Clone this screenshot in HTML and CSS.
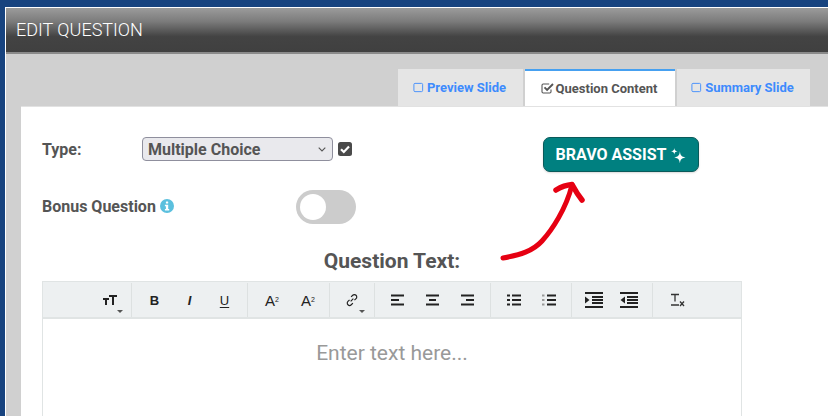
FILE: index.html
```html
<!DOCTYPE html>
<html lang="en">
<head>
<meta charset="utf-8">
<title>Edit Question</title>
<link rel="stylesheet" href="styles.css">
</head>
<body>
<div class="modal">
  <header class="modal-head">EDIT QUESTION</header>
  <div class="modal-body">
    <nav class="tabs">
      <a class="tab"><svg class="tab-ico" viewBox="0 0 12 12"><rect x="1" y="1.5" width="9.5" height="9" rx="1.2" fill="none" stroke="currentColor" stroke-width="1"/></svg>Preview Slide</a>
      <a class="tab tab-active"><svg class="tab-ico tab-ico-check" viewBox="0 0 13 13"><path d="M10 7.500v2.300a1.200 1.200 0 0 1-1.200 1.200H2.200A1.200 1.200 0 0 1 1 9.800V3.200A1.200 1.200 0 0 1 2.200 2h6" fill="none" stroke="currentColor" stroke-width="1.100"/><path d="M3.500 5.400l2.600 2.600L12 2" fill="none" stroke="currentColor" stroke-width="1.900"/></svg>Question Content</a>
      <a class="tab"><svg class="tab-ico" viewBox="0 0 12 12"><rect x="1" y="1.500" width="9.500" height="9" rx="1.200" fill="none" stroke="currentColor" stroke-width="1"/></svg>Summary Slide</a>
    </nav>
    <main class="panel">
      <div class="top-row">
        <div class="fields">
          <div class="field type-field">
            <label class="field-label type-label">Type:</label>
            <span class="select-wrap">
              <select class="type-select"><option>Multiple Choice</option></select>
              <svg class="chevron" viewBox="0 0 8 5"><path d="M.7.7L4 4l3.300-3.300" fill="none" stroke="#555" stroke-width="1.100"/></svg>
            </span>
            <svg class="check" viewBox="0 0 14 14"><rect width="14" height="14" rx="2.500" fill="#4a4a4a"/><path d="M3 7.200l2.800 2.800L11 4.600" fill="none" stroke="#fff" stroke-width="2.200"/></svg>
          </div>
          <div class="field bonus-field">
            <label class="field-label bonus-label">Bonus Question <svg class="info" viewBox="0 0 14 14"><circle cx="7" cy="7" r="7" fill="#5bc0de"/><rect x="5.900" y="2.400" width="2.300" height="2.200" rx=".5" fill="#fff"/><path d="M4.900 5.800h3.300v4.100h1v1.500H4.900V9.900h1V7.300h-1z" fill="#fff"/></svg></label>
            <span class="toggle"><span class="knob"></span></span>
          </div>
        </div>
        <button class="assist">BRAVO ASSIST <svg class="spark" viewBox="0 0 16 16"><path d="M9.500 3.500C10 8 11 9.200 15.500 10 11 10.800 10 12 9.500 16.500 9 12 8 10.800 3.500 10 8 9.200 9 8 9.500 3.500z" fill="#fff"/><path d="M3.500 0C3.800 2.400 4.400 3 7 3.500 4.400 4 3.800 4.600 3.500 7 3.200 4.600 2.600 4 0 3.500 2.600 3 3.200 2.400 3.500 0z" fill="#fff"/></svg></button>
      </div>
      <h2 class="q-title">Question Text:</h2>
      <section class="editor">
        <div class="toolbar">
          <div class="group g-size">
            <span class="tool"><svg viewBox="0 0 14 10" class="ico-t"><path d="M0 4h6M3 4v6M6 1h8M10 1v9" fill="none" stroke="#222" stroke-width="2"/></svg><i class="caret"></i></span>
          </div>
          <div class="group g-format">
            <span class="tool ltr bold">B</span>
            <span class="tool ltr ital">I</span>
            <span class="tool ltr under">U</span>
          </div>
          <div class="group g-script">
            <span class="tool ltr ltr-a">A<sup class="mini">2</sup></span>
            <span class="tool ltr ltr-a">A<sub class="mini">2</sub></span>
          </div>
          <div class="group g-link">
            <span class="tool"><svg viewBox="0 0 20 20" class="ico"><path d="M8.500 11.500l3-3M9 6.500l1.800-1.800a2.600 2.600 0 0 1 3.700 3.700l-1.800 1.800M11 13.500l-1.800 1.800a2.600 2.600 0 0 1-3.700-3.700l1.800-1.800" fill="none" stroke="#222" stroke-width="1.300"/></svg><i class="caret"></i></span>
          </div>
          <div class="group g-align">
            <span class="tool"><svg viewBox="0 0 14 12" class="ico-s"><path d="M0 1.500h13M0 6h8M0 10.500h13" stroke="#222" stroke-width="1.800"/></svg></span>
            <span class="tool"><svg viewBox="0 0 14 12" class="ico-s"><path d="M0 1.500h13M3 6h7M0 10.500h13" stroke="#222" stroke-width="1.800"/></svg></span>
            <span class="tool"><svg viewBox="0 0 14 12" class="ico-s"><path d="M0 1.500h13M5 6h8M0 10.500h13" stroke="#222" stroke-width="1.800"/></svg></span>
          </div>
          <div class="group g-list">
            <span class="tool"><svg viewBox="0 0 14 12" class="ico-s"><path d="M0 1.500h3M0 6h3M0 10.500h3M5 1.500h9M5 6h9M5 10.500h9" stroke="#222" stroke-width="1.800"/></svg></span>
            <span class="tool"><svg viewBox="0 0 14 12" class="ico-s"><path d="M5 1.500h9M5 6h9M5 10.500h9" stroke="#222" stroke-width="1.800"/><path d="M0 1.500h2.500M0 6h2.500M0 10.500h2.500" stroke="#999" stroke-width="1.800"/></svg></span>
          </div>
          <div class="group g-indent">
            <span class="tool"><svg viewBox="0 0 18 16" class="ico-i"><path d="M0 1h18M7 5h11M7 8h11M7 11h11M0 15h18" stroke="#222" stroke-width="2"/><path d="M0 4.500L4.500 8 0 11.500z" fill="#222"/></svg></span>
            <span class="tool"><svg viewBox="0 0 18 16" class="ico-i"><path d="M0 1h18M7 5h11M7 8h11M7 11h11M0 15h18" stroke="#222" stroke-width="2"/><path d="M5 4.500L.5 8 5 11.500z" fill="#222"/></svg></span>
          </div>
          <div class="group g-clear">
            <span class="tool"><svg viewBox="0 0 14 14" class="ico-c"><path d="M0 1.500h8M4 1.500v7M0 12h8" fill="none" stroke="#333" stroke-width="1.300"/><path d="M9 8.500l4 4.500M13 8.500L9 13" fill="none" stroke="#333" stroke-width="1.300"/></svg></span>
          </div>
        </div>
        <div class="edit-area">Enter text here...</div>
      </section>
      <svg class="arrow" viewBox="0 0 90 90"><path d="M3 82C20 79 33 75 42 65 52 54 66 33 72 9" fill="none" stroke="#e60012" stroke-width="5" stroke-linecap="round"/><path d="M56 14C61 11 66 9 72 8.500 75 14 78 19 82 24" fill="none" stroke="#e60012" stroke-width="5.500" stroke-linecap="round" stroke-linejoin="round"/></svg>
    </main>
  </div>
</div>
</body>
</html>
```

FILE: styles.css
```css
* { box-sizing: border-box; }
html, body { margin: 0; height: 416px; overflow: hidden; }
body { background: #17437f; padding: 7px 0 0 5px; font-family: Roboto, "Liberation Sans", sans-serif; color: #555; }
.modal { border: 1px solid #fff; border-right: 0; border-bottom: 0; height: 409px; width: 823px; overflow: hidden; }
.modal-head { height: 46px; padding: 0 0 0 10px; line-height: 43px; font-size: 18px; font-weight: 300; color: #fff; background: linear-gradient(#9b9b9b 0, #7c7c7c 30%, #434343 65%, #404040 100%); border-bottom: 2px solid #8a8a8a; }
.modal-body { background: #d0d0d0; height: 400px; padding: 15px 0 0 15px; }
.tabs { display: flex; gap: 2px; padding-left: 377px; height: 38px; }
.tab { display: flex; align-items: center; justify-content: center; height: 38px; font-size: 13px; font-weight: 700; color: #3d8bfd; background: #e5e5e5; padding: 0 2px 1px 0; }
.tab:nth-child(1) { width: 125px; }
.tab-active { width: 150px; background: #fff; color: #555; border-top: 2px solid #46a0f0; padding: 0 2px 1px 0; }
.tab:nth-child(3) { width: 133px; }
.tab-ico { width: 11px; height: 11px; margin-right: 3px; }
.tab-ico-check { width: 13px; height: 13px; margin-right: 2px; }
.panel { position: relative; background: #fff; height: 400px; padding: 30px 0 0 21px; border-top: 1px solid #e2e2e2; margin-top: -1px; }
.top-row { display: flex; }
.fields { width: 501px; }
.field { display: flex; align-items: center; color: #555; }
.field-label { font-weight: 700; font-size: 16px; }
.type-label { width: 100px; }
.type-field { height: 24px; }
.select-wrap { position: relative; display: flex; width: 191px; height: 24px; }
.type-select { appearance: none; width: 191px; height: 24px; font: 700 16px Roboto, sans-serif; color: #555; background: #e9e9ed; border: 1px solid #8f8f9d; border-radius: 4px; padding: 0 0 0 5px; }
.chevron { position: absolute; right: 7px; top: 10px; width: 8px; height: 5px; }
.check { width: 14px; height: 14px; margin-left: 5px; }
.bonus-field { margin-top: 29px; height: 34px; }
.bonus-label { width: 254px; display: flex; align-items: center; gap: 4px; padding-bottom: 2px; }
.info { width: 14px; height: 14px; }
.toggle { display: block; width: 60px; height: 34px; border-radius: 17px; background: #ccc; padding: 4px; }
.knob { display: block; width: 26px; height: 26px; border-radius: 50%; background: #fff; }
.assist { width: 156px; height: 35px; margin: 0; padding: 0; display: flex; align-items: center; justify-content: center; gap: 5px; background: #008080; border: 1px solid #0a5a5a; border-radius: 7px; color: #fff; font: 700 16px Roboto, sans-serif; box-shadow: 0 1px 2px rgba(0,0,0,.15); }
.spark { width: 15px; height: 15px; margin-top: 2px; }
.q-title { margin: 23px 0 0; width: 700px; text-align: center; font-size: 21px; line-height: 28px; font-weight: 700; color: #555; }
.editor { width: 700px; margin-top: 6px; }
.toolbar { display: flex; height: 38px; background: #edf0f1; border: 1px solid #e0e4e4; border-bottom: 2px solid #e0e4e4; padding-top: 1px; }
.group { display: flex; align-items: center; height: 34px; border-right: 1px solid #dde1e1; }
.g-size { width: 89px; justify-content: flex-end; padding-right: 4px; }
.g-format { width: 116px; padding-left: 5px; }
.g-script { width: 82px; padding-left: 6px; }
.g-link { width: 45px; padding-left: 4px; }
.g-align { width: 116px; padding-left: 5px; }
.g-list { width: 81px; padding-left: 5px; }
.g-indent { width: 81px; padding-left: 4px; }
.g-clear { border-right: 0; padding-left: 7px; }
.tool { position: relative; width: 35px; height: 30px; display: flex; align-items: center; justify-content: center; color: #222; font: 400 13px "Liberation Sans", sans-serif; }
.g-script .tool { width: 36px; font-size: 15px; }
.g-indent .tool { width: 35px; }
.bold { font-weight: 700; }
.ital { font-style: italic; font-weight: 700; }
.under { text-decoration: underline; text-underline-offset: 2px; }
.mini { font-size: 7px; line-height: 0; }
.ico { width: 18px; height: 18px; }
.ico-t { width: 14px; height: 10px; }
.ico-s { width: 14px; height: 12px; }
.ico-i { width: 18px; height: 16px; }
.ico-c { width: 14px; height: 14px; }
.caret { position: absolute; right: 4px; bottom: 2px; border: 3px solid transparent; border-top-color: #555; border-bottom: 0; }
.edit-area { height: 110px; border: 1px solid #e0e4e4; border-top: 0; padding: 22px 0 0; text-align: center; font-size: 21px; line-height: 24px; color: #999; }
.arrow { position: absolute; left: 479px; top: 69px; width: 90px; height: 90px; pointer-events: none; }
```
